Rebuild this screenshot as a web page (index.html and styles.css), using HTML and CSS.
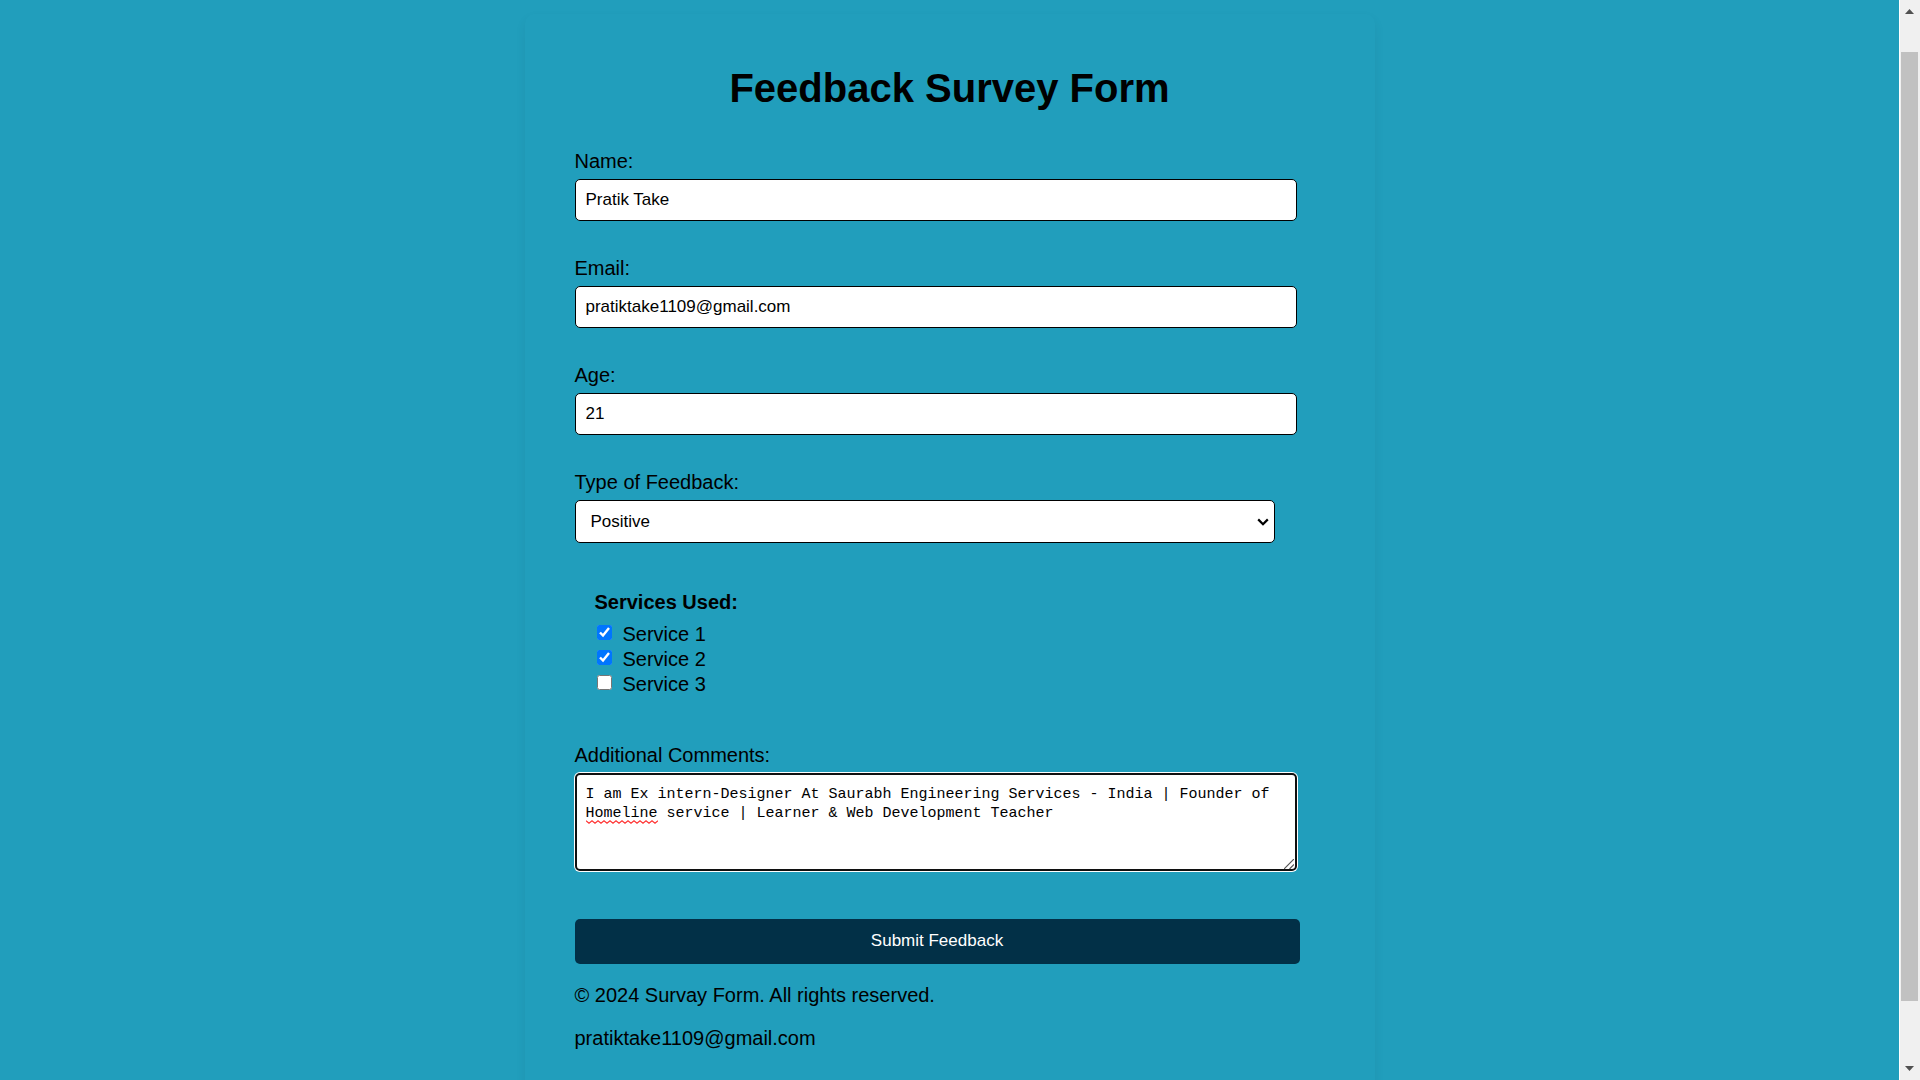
FILE: index.html
```html
<!DOCTYPE html>
<html lang="en">
<head>
  <meta charset="utf-8">
  <meta name="viewport" content="width=device-width, initial-scale=1">
  <title>Feedback Survey Form</title>
  <link rel="stylesheet" href="styles.css">
</head>
<body>
  <main class="card">
    <h1 class="title">Feedback Survey Form</h1>
    <form class="form">
      <div class="field">
        <label for="name">Name:</label>
        <input class="control" type="text" id="name" value="Pratik Take">
      </div>
      <div class="field">
        <label for="email">Email:</label>
        <input class="control" type="email" id="email" value="pratiktake1109@gmail.com">
      </div>
      <div class="field">
        <label for="age">Age:</label>
        <input class="control" type="text" inputmode="numeric" id="age" value="21">
      </div>
      <div class="field">
        <label for="type">Type of Feedback:</label>
        <div class="select-wrap">
          <select class="select" id="type">
            <option selected>Positive</option>
            <option>Negative</option>
          </select>
          <svg class="chevron" viewBox="0 0 12 8" aria-hidden="true"><path d="M1.2 1.4 6 6.2l4.800-4.800" fill="none" stroke="#000" stroke-width="2.200"/></svg>
        </div>
      </div>
      <fieldset class="services">
        <legend class="legend">Services Used:</legend>
        <label class="option"><input class="check" type="checkbox" checked>Service 1</label>
        <label class="option"><input class="check" type="checkbox" checked>Service 2</label>
        <label class="option"><input class="check" type="checkbox">Service 3</label>
      </fieldset>
      <div class="field">
        <label for="comments">Additional Comments:</label>
        <div class="comments-wrap">
          <textarea class="comments" id="comments" spellcheck="false">I am Ex intern-Designer At Saurabh Engineering Services - India | Founder of Homeline service | Learner &amp; Web Development Teacher</textarea>
          <svg class="squiggle" viewBox="0 0 72 4" aria-hidden="true"><path d="M0 .8l3 2.400 3-2.400 3 2.400 3-2.400 3 2.400 3-2.400 3 2.400 3-2.400 3 2.400 3-2.400 3 2.400 3-2.400 3 2.400 3-2.400 3 2.400 3-2.400 3 2.400 3-2.400 3 2.400 3-2.400 3 2.400 3-2.400 3 2.400 3-2.400" fill="none" stroke="#f33" stroke-width="1.200"/></svg>
          <svg class="grip" viewBox="0 0 10 10" aria-hidden="true"><path d="M0 10 10 0M5.500 10 10 5.500" fill="none" stroke="#555" stroke-width="1.200"/></svg>
        </div>
      </div>
      <button class="submit" type="submit">Submit Feedback</button>
    </form>
    <footer class="footer">
      <p>© 2024 Survay Form. All rights reserved.</p>
      <p>pratiktake1109@gmail.com</p>
    </footer>
  </main>
  <div class="scrollbar" aria-hidden="true">
    <svg class="arrow" viewBox="0 0 9 5"><path d="M0 5 4.500 0 9 5z" fill="#505050"/></svg>
    <div class="track"><div class="thumb"></div></div>
    <svg class="arrow" viewBox="0 0 9 5"><path d="M0 0 4.500 5 9 0z" fill="#505050"/></svg>
  </div>
</body>
</html>
```
FILE: styles.css
```css
* {
  box-sizing: border-box;
}

body {
  margin: 0;
  padding: 14px 21px 14px 0;
  background: #219ebc;
  color: #000;
  font: 20px/22px "Liberation Sans", Arial, sans-serif;
}

.card {
  max-width: 850px;
  margin: 0 auto;
  padding: 51px 50px;
  border-radius: 10px;
  box-shadow: 0 5px 12px rgba(0, 0, 0, 0.06);
}

.title {
  margin: 0 0 39px;
  font-size: 40px;
  line-height: 46px;
  text-align: center;
}

.form {
  display: flex;
  flex-direction: column;
  gap: 36px;
}

.field {
  display: flex;
  flex-direction: column;
  gap: 7px;
}

.control,
.select {
  width: 100%;
  border: 1px solid #000;
  border-radius: 5px;
  background: #fff;
  color: #000;
  font: 17px/20px "Liberation Sans", Arial, sans-serif;
}

.control {
  max-width: 722px;
  padding: 10px;
}

.select-wrap {
  position: relative;
  max-width: 700px;
}

.select {
  display: block;
  height: 43px;
  padding: 0 32px 0 15px;
  appearance: none;
}

.chevron {
  position: absolute;
  top: 18px;
  right: 6px;
  width: 12px;
  height: 8px;
  pointer-events: none;
}

.services {
  display: flex;
  flex-direction: column;
  margin: 12px 0 11px;
  padding: 0 20px;
  border: 0;
}

.legend {
  padding: 0;
  margin-bottom: 9px;
  font-weight: bold;
}

.option {
  display: flex;
  align-items: flex-start;
  gap: 11px;
  line-height: 25px;
}

.check {
  width: 15px;
  height: 15px;
  margin: 3px 0 0 2px;
  accent-color: #0075ff;
}

.comments-wrap {
  position: relative;
  max-width: 722px;
}

.comments {
  display: block;
  width: 100%;
  height: 98px;
  padding: 10px 9px;
  border: 2px solid #101010;
  border-radius: 5px;
  outline: 0;
  box-shadow: 0 0 0 1px #fff;
  background: #fff;
  color: #000;
  font: 15px/19px "Liberation Mono", monospace;
  resize: none;
}

.squiggle {
  position: absolute;
  top: 47px;
  left: 11px;
  width: 72px;
  height: 4px;
  pointer-events: none;
}

.grip {
  position: absolute;
  right: 3px;
  bottom: 2px;
  width: 10px;
  height: 10px;
  pointer-events: none;
}

.submit {
  width: 100%;
  max-width: 725px;
  margin-top: 12px;
  padding: 11px 12px 13px;
  border: 0;
  border-radius: 5px;
  background: #023047;
  color: #fff;
  font: 17px/21px "Liberation Sans", Arial, sans-serif;
}

.footer p {
  margin: 20px 0;
  line-height: 23px;
}

.scrollbar {
  position: fixed;
  top: 0;
  right: 0;
  bottom: 0;
  display: flex;
  flex-direction: column;
  align-items: center;
  gap: 10px;
  width: 21px;
  padding: 9px 1px 9px 0;
  border-left: 1px solid #fff;
  background: #f0f0f0;
}

.arrow {
  width: 9px;
  height: 5px;
}

.track {
  flex: 1;
  width: 17px;
  padding: 28px 0 55px;
}

.thumb {
  height: 100%;
  background: #c1c1c1;
}
```
